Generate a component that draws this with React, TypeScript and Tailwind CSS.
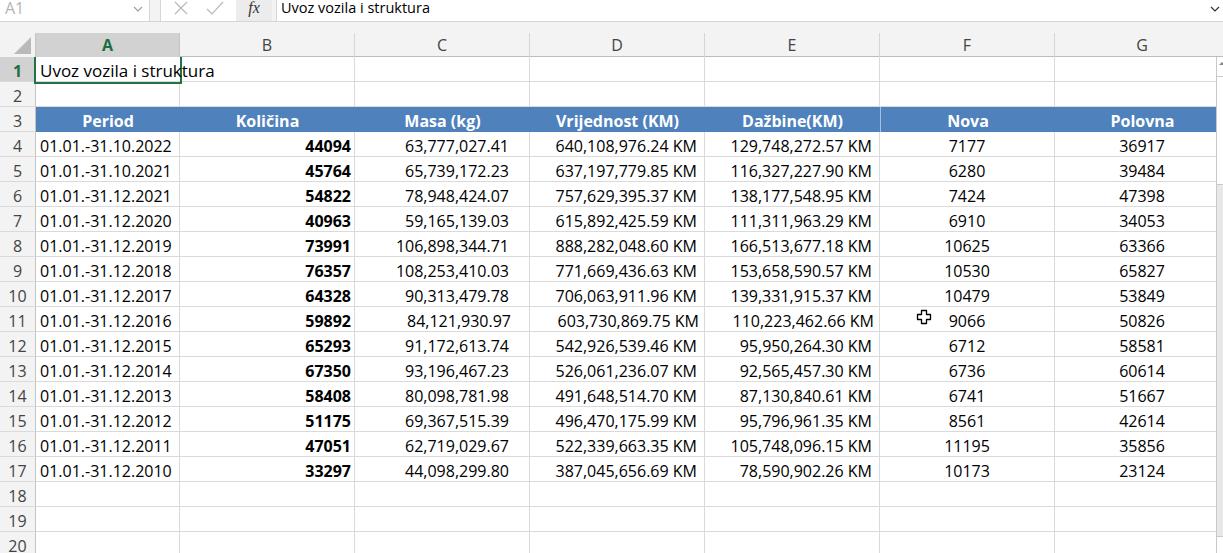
import React from "react";

const rows: string[][] = [
  ["01.01.-31.10.2022", "44094", "63,777,027.41", "640,108,976.24 KM", "129,748,272.57 KM", "7177", "36917"],
  ["01.01.-31.10.2021", "45764", "65,739,172.23", "637,197,779.85 KM", "116,327,227.90 KM", "6280", "39484"],
  ["01.01.-31.12.2021", "54822", "78,948,424.07", "757,629,395.37 KM", "138,177,548.95 KM", "7424", "47398"],
  ["01.01.-31.12.2020", "40963", "59,165,139.03", "615,892,425.59 KM", "111,311,963.29 KM", "6910", "34053"],
  ["01.01.-31.12.2019", "73991", "106,898,344.71", "888,282,048.60 KM", "166,513,677.18 KM", "10625", "63366"],
  ["01.01.-31.12.2018", "76357", "108,253,410.03", "771,669,436.63 KM", "153,658,590.57 KM", "10530", "65827"],
  ["01.01.-31.12.2017", "64328", "90,313,479.78", "706,063,911.96 KM", "139,331,915.37 KM", "10479", "53849"],
  ["01.01.-31.12.2016", "59892", "84,121,930.97", "603,730,869.75 KM", "110,223,462.66 KM", "9066", "50826"],
  ["01.01.-31.12.2015", "65293", "91,172,613.74", "542,926,539.46 KM", "95,950,264.30 KM", "6712", "58581"],
  ["01.01.-31.12.2014", "67350", "93,196,467.23", "526,061,236.07 KM", "92,565,457.30 KM", "6736", "60614"],
  ["01.01.-31.12.2013", "58408", "80,098,781.98", "491,648,514.70 KM", "87,130,840.61 KM", "6741", "51667"],
  ["01.01.-31.12.2012", "51175", "69,367,515.39", "496,470,175.99 KM", "95,796,961.35 KM", "8561", "42614"],
  ["01.01.-31.12.2011", "47051", "62,719,029.67", "522,339,663.35 KM", "105,748,096.15 KM", "11195", "35856"],
  ["01.01.-31.12.2010", "33297", "44,098,299.80", "387,045,656.69 KM", "78,590,902.26 KM", "10173", "23124"],
];

const headers = ["Period", "Količina", "Masa (kg)", "Vrijednost (KM)", "Dažbine(KM)", "Nova", "Polovna"];
const letters = ["A", "B", "C", "D", "E", "F", "G"];

const cols = "grid grid-cols-[36px_144px_175px_175px_175px_175px_175px_175px]";
const cell =
  "h-[25px] border-r border-b border-[#dadada] flex items-center pt-[3px] whitespace-nowrap text-[16px] text-black";
const rowHead =
  "h-[25px] border-r border-b border-r-[#c4c4c4] border-b-[#dadada] bg-[#f3f3f3] flex items-center justify-center pt-[3px] text-[16px] text-[#444]";

function DataCell({ ci, v, shifted }: { ci: number; v: string; shifted: boolean }) {
  if (ci === 0) return <div className={`${cell} pl-[4px]`}>{v}</div>;
  if (ci === 1) return <div className={`${cell} justify-end pr-[3px] font-bold`}>{v}</div>;
  if (ci === 2)
    return <div className={`${cell} justify-end ${shifted ? "pr-[18px]" : "pr-[20px]"}`}>{v}</div>;
  if (ci === 3 || ci === 4)
    return <div className={`${cell} justify-end ${shifted ? "pr-[5px]" : "pr-[7px]"}`}>{v}</div>;
  return <div className={`${cell} justify-center`}>{v}</div>;
}

export default function App() {
  return (
    <div className="relative w-[1223px] h-[553px] overflow-hidden bg-white font-['Open_Sans',sans-serif]">
      {/* formula bar */}
      <div className="h-[22px] overflow-hidden bg-[#f3f3f3] border-b border-[#d6d6d6]">
        <div className="-mt-[7px] h-[30px] flex items-stretch">
          <div className="w-[150px] bg-white border-r border-[#d6d6d6] flex items-center justify-between pl-[5px] pr-[6px]">
            <span className="text-[16px] text-[#b4b4b4]">A1</span>
            <svg width="10" height="6" viewBox="0 0 10 6" className="mt-[2px]">
              <path d="M1 1 L5 5 L9 1" fill="none" stroke="#a0a0a0" strokeWidth="1.2" />
            </svg>
          </div>
          <div className="w-[10px]" />
          <div className="w-[112px] flex items-stretch border-l border-[#d6d6d6] bg-white">
            <div className="w-[75px] flex items-center justify-around px-[4px]">
              <svg width="16" height="16" viewBox="0 0 16 16">
                <path d="M2 2 L14 14 M14 2 L2 14" stroke="#b8b8b8" strokeWidth="1.2" fill="none" />
              </svg>
              <svg width="18" height="16" viewBox="0 0 18 16">
                <path d="M1 9 L6 14 L17 2" stroke="#b8b8b8" strokeWidth="1.2" fill="none" />
              </svg>
            </div>
            <div className="flex-1 bg-[#ececec] flex items-center justify-center">
              <span className="font-['Liberation_Serif',serif] italic text-[16px] text-[#333]">fx</span>
            </div>
          </div>
          <div className="w-[4px]" />
          <div className="flex-1 bg-white border-l border-[#d6d6d6] flex items-center justify-between pl-[4px] pr-[3px]">
            <span className="text-[14.5px] text-black">Uvoz vozila i struktura</span>
            <svg width="10" height="6" viewBox="0 0 10 6" className="mt-[2px]">
              <path d="M1 1 L5 5 L9 1" fill="none" stroke="#333" strokeWidth="1.2" />
            </svg>
          </div>
        </div>
      </div>
      <div className="h-[11px] bg-[#f3f3f3]" />

      {/* column headers */}
      <div className={`${cols} h-[24px] bg-[#f3f3f3] border-b border-[#bcbcbc]`}>
        <div className="relative border-r border-[#c4c4c4] bg-[#f3f3f3]">
          <svg width="20" height="20" viewBox="0 0 20 20" className="absolute right-[3px] bottom-[2px]">
            <path d="M19 2 L19 19 L2 19 Z" fill="#b9b9b9" />
          </svg>
        </div>
        {letters.map((l, i) => (
          <div
            key={l}
            className={
              i === 0
                ? "bg-[#d2d2d2] border-r border-[#c4c4c4] flex items-center justify-center text-[16px] font-bold text-[#1e6e42]"
                : "border-r border-[#d6d6d6] flex items-center justify-center text-[16px] text-[#444]"
            }
          >
            {l}
          </div>
        ))}
      </div>

      {/* body */}
      <div className="flex">
        <div className="relative flex-1 overflow-hidden">
          <div className={cols}>
            {/* row 1 */}
            <div className={`${rowHead} !bg-[#d2d2d2] !text-[#1e6e42] font-bold`}>1</div>
            <div className="h-[25px] border-b border-[#dadada] flex items-center pt-[3px] pl-[4px] whitespace-nowrap text-[17px] text-black overflow-visible z-10">
              Uvoz vozila i struktura
            </div>
            <div className={cell} />
            <div className={cell} />
            <div className={cell} />
            <div className={cell} />
            <div className={cell} />
            <div className={cell} />
            {/* row 2 */}
            <div className={rowHead}>2</div>
            {letters.map((l) => (
              <div key={"r2" + l} className={cell} />
            ))}
            {/* row 3 header */}
            <div className={rowHead}>3</div>
            {headers.map((h, i) => (
              <div
                key={h}
                className={
                  i === 5
                    ? "h-[25px] bg-[#4f81bd] border-l border-[#a9bedc] flex items-center justify-center pt-[3px] text-[16px] font-bold text-white"
                    : "h-[25px] bg-[#4f81bd] flex items-center justify-center pt-[3px] text-[16px] font-bold text-white"
                }
              >
                {h}
              </div>
            ))}
            {/* data rows */}
            {rows.map((r, ri) => (
              <React.Fragment key={ri}>
                <div className={rowHead}>{ri + 4}</div>
                {r.map((v, ci) => (
                  <DataCell key={ci} ci={ci} v={v} shifted={ri === 7} />
                ))}
              </React.Fragment>
            ))}
            {[18, 19, 20].map((n) => (
              <React.Fragment key={n}>
                <div className={rowHead}>{n}</div>
                {letters.map((l) => (
                  <div key={n + l} className={cell} />
                ))}
              </React.Fragment>
            ))}
          </div>
          {/* selection of A1 */}
          <div className="absolute left-[34px] top-[-2px] w-[148px] h-[29px] border-2 border-[#217346] pointer-events-none" />
        </div>

        {/* vertical scrollbar */}
        <div className="w-[7px] h-[496px] flex flex-col bg-[#e8e8e8] border-l border-[#c8c8c8]">
          <div className="h-[20px] bg-white border-b border-[#c8c8c8] flex items-start pt-[5px] pl-[2px]">
            <div className="w-0 h-0 border-l-[3px] border-r-[3px] border-b-[3px] border-l-transparent border-r-transparent border-b-[#888]" />
          </div>
          <div className="h-[108px] bg-white border-b border-[#c8c8c8]" />
          <div className="flex-1" />
          <div className="h-[17px] bg-white border-t border-[#c8c8c8]" />
        </div>
      </div>

      {/* mouse cursor */}
      <svg width="16" height="16" viewBox="0 0 16 16" className="absolute left-[916px] top-[309px]">
        <path
          d="M5.5 1.5 H10.5 V5.5 H14.5 V10.5 H10.5 V14.5 H5.5 V10.5 H1.5 V5.5 H5.5 Z"
          fill="white"
          stroke="black"
          strokeWidth="1.3"
          strokeLinejoin="round"
        />
      </svg>
    </div>
  );
}
